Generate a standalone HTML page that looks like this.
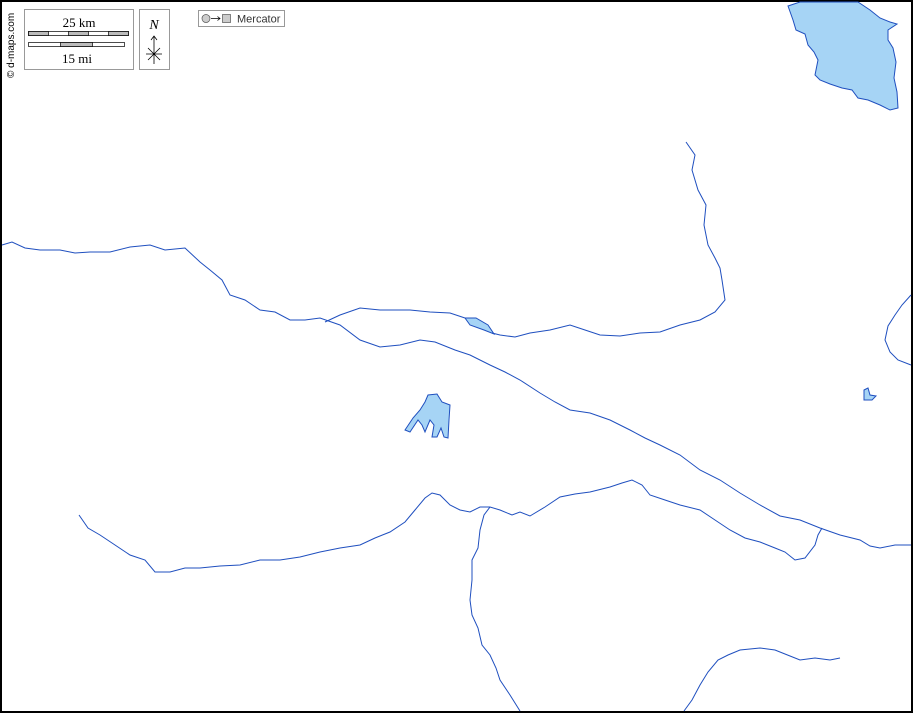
<!DOCTYPE html>
<html><head><meta charset="utf-8"><style>
html,body{margin:0;padding:0;background:#fff}
svg{display:block}
</style></head><body>
<svg width="913" height="713" viewBox="0 0 913 713" xmlns="http://www.w3.org/2000/svg">
<rect x="1" y="1" width="911" height="711" fill="#fff" stroke="#000" stroke-width="2"/>
<g fill="#a6d4f5" stroke="#1f4fbf" stroke-width="1">
<path d="M788,6 L800,2 L858,2 L870,10 L880,18 L890,22 L897,24 L888,30 L888,40 L893,48 L896,62 L894,78 L897,92 L898,108 L890,110 L880,105 L868,100 L858,98 L852,90 L842,88 L830,84 L820,80 L815,75 L818,60 L814,52 L808,45 L805,34 L796,30 L793,20 Z"/>
<path d="M405,430 L413,418 L420,410 L425,402 L428,395 L437,394 L442,402 L450,405 L449,420 L448,438 L444,437 L441,428 L437,437 L432,437 L434,425 L430,420 L425,432 L422,425 L418,420 L410,432 Z"/>
<path d="M465,318 L476,318 L488,325 L494,334 L484,330 L470,325 Z"/>
<path d="M864,390 L868,388 L870,395 L876,396 L872,400 L864,400 Z"/>
</g>
<g fill="none" stroke="#1f4fbf" stroke-width="1">
<path d="M2,245 L12,242 L25,248 L40,250 L60,250 L75,253 L90,252 L110,252 L130,247 L150,245 L165,250 L185,248 L200,262 L210,270 L222,280 L230,295 L245,300 L260,310 L275,312 L290,320 L305,320 L320,318 L340,325 L360,340 L380,347 L400,345 L420,340 L435,342 L455,350 L470,355 L490,365 L505,372 L520,380 L540,393 L555,402 L570,410 L590,413 L610,420 L630,430 L645,438 L660,445 L680,455 L700,470 L720,480 L740,493 L760,505 L780,516 L800,520 L820,528 L840,535 L860,540 L870,546 L880,548 L895,545 L911,545"/>
<path d="M686,142 L695,155 L692,170 L698,190 L706,205 L704,225 L708,245 L715,258 L720,268 L722,280 L725,300 L715,312 L700,320 L680,325 L660,332 L640,333 L620,336 L600,335 L585,330 L570,325 L550,330 L530,333 L515,337 L500,335 L492,333 M465,318 L450,313 L430,312 L410,310 L380,310 L360,308 L340,315 L325,322"/>
<path d="M79,515 L88,528 L100,535 L115,545 L130,555 L145,560 L155,572 L170,572 L185,568 L200,568 L220,566 L240,565 L260,560 L280,560 L300,557 L320,552 L340,548 L360,545 L375,538 L390,532 L405,522 L415,510 L425,498 L432,493 L440,495 L450,505 L460,510 L470,512 L480,507 L490,507 L500,510 L512,515 L520,512 L530,516 L545,507 L560,497 L575,494 L590,492 L610,487 L622,483 L632,480 L642,485 L650,495 L665,500 L680,505 L700,510 L715,520 L730,530 L745,538 L760,542 L775,548 L785,552 L795,560 L805,558 L815,545 L818,535 L822,528"/>
<path d="M490,507 L484,515 L480,530 L478,548 L472,560 L472,580 L470,600 L472,615 L478,628 L482,645 L490,655 L496,668 L500,680 L510,695 L520,711"/>
<path d="M684,711 L692,700 L700,685 L708,672 L718,660 L728,655 L740,650 L760,648 L775,650 L790,656 L800,660 L815,658 L830,660 L840,658"/>
<path d="M911,295 L902,305 L895,315 L888,326 L885,340 L890,352 L898,360 L911,365"/>
</g>
<text x="14" y="78" transform="rotate(-90 14 78)" font-family="Liberation Sans, sans-serif" font-size="10" fill="#000">© d-maps.com</text>
<rect x="24.5" y="9.5" width="109" height="60" fill="#fff" stroke="#999"/>
<text x="79" y="27" text-anchor="middle" font-family="Liberation Serif, serif" font-size="13">25 km</text>
<rect x="28.5" y="31.5" width="100" height="4" fill="#fff" stroke="#000" stroke-width="0.7"/>
<rect x="28.5" y="31.5" width="20" height="4" fill="#bbb" stroke="#000" stroke-width="0.7"/>
<rect x="68.5" y="31.5" width="20" height="4" fill="#bbb" stroke="#000" stroke-width="0.7"/>
<rect x="108.5" y="31.5" width="20" height="4" fill="#bbb" stroke="#000" stroke-width="0.7"/>
<rect x="28.5" y="42.5" width="96" height="4" fill="#fff" stroke="#000" stroke-width="0.7"/>
<rect x="60.5" y="42.5" width="32" height="4" fill="#bbb" stroke="#000" stroke-width="0.7"/>
<text x="77" y="63" text-anchor="middle" font-family="Liberation Serif, serif" font-size="13">15 mi</text>
<rect x="139.5" y="9.5" width="30" height="60" fill="#fff" stroke="#999"/>
<text x="154" y="29" text-anchor="middle" font-family="Liberation Serif, serif" font-style="italic" font-size="14">N</text>
<g stroke="#000" stroke-width="0.8" fill="none">
<path d="M154,36 L154,64 M151,40 L154,36 L157,40 M146,54 L162,54 M148,48 L160,60 M160,48 L148,60"/>
</g>
<rect x="198.5" y="10.5" width="86" height="16" fill="#fff" stroke="#999"/>
<circle cx="206" cy="18.5" r="4" fill="#ccc" stroke="#555" stroke-width="0.7"/>
<path d="M211,18.5 L220,18.5 M217.5,16.5 L220,18.5 L217.5,20.5" stroke="#000" stroke-width="0.8" fill="none"/>
<rect x="222.5" y="14.5" width="8" height="8" fill="#ccc" stroke="#555" stroke-width="0.7"/>
<text x="237" y="22.5" font-family="Liberation Sans, sans-serif" font-size="11" fill="#333">Mercator</text>
</svg>
</body></html>
